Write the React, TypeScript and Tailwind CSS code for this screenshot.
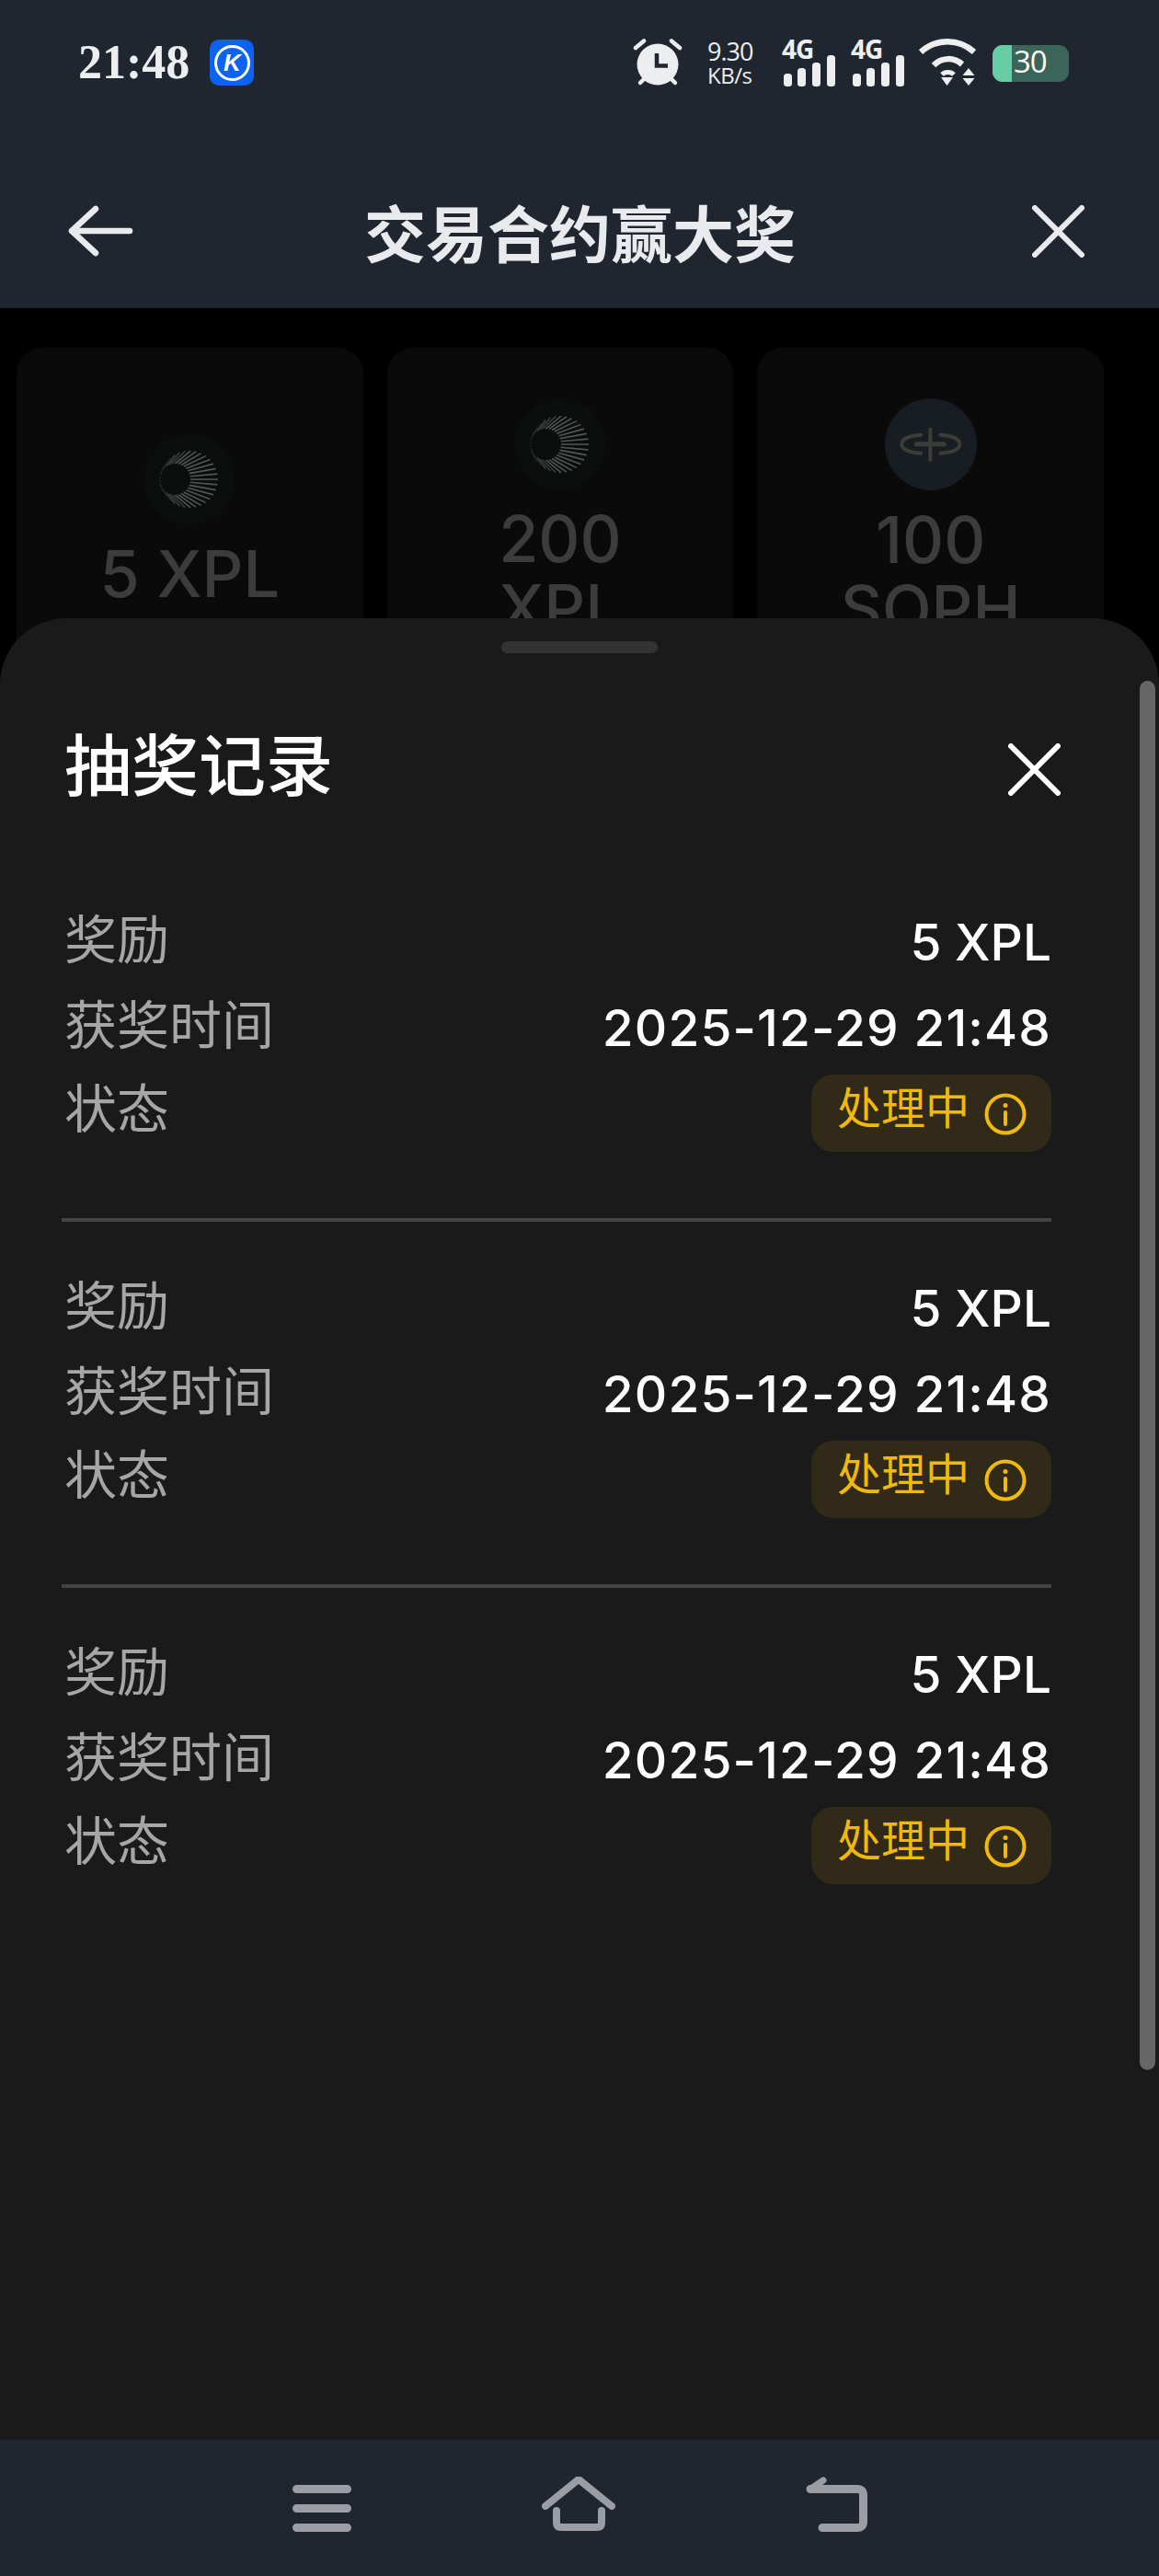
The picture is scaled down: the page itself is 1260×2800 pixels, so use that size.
import React from "react";

const rays = Array.from({ length: 33 }, (_, i) => -176 + i * 11);

function Burst() {
  return (
    <svg width="98" height="98" viewBox="0 0 98 98" className="shrink-0">
      <circle cx="49" cy="49" r="49" fill="#0a0e0d" />
      {rays.map((a) => {
        const t = (a * Math.PI) / 180;
        const fade = Math.abs(a) > 125 ? 0.25 : Math.abs(a) > 90 ? 0.65 : 1;
        const x1 = 33 + 17 * Math.cos(t);
        const y1 = 49 + 17 * Math.sin(t);
        const x2 = 49 + 31 * Math.cos(t);
        const y2 = 49 + 31 * Math.sin(t);
        return <line key={a} x1={x1} y1={y1} x2={x2} y2={y2} stroke="#555555" strokeWidth="1.6" opacity={fade} />;
      })}
    </svg>
  );
}

function Soph() {
  return (
    <svg width="100" height="100" viewBox="12.67 8.33 100 100" className="shrink-0">
      <circle cx="62.67" cy="58.33" r="50" fill="#181c23" />
      <g fill="none" stroke="#3b3d37" strokeWidth="4" strokeLinecap="round">
        <path d="M52 48C38 49 31 53 31 58C31 63 38 67 52 68" />
        <path d="M73 48C87 49 94 53 94 58C94 63 87 67 73 68" />
        <path d="M47 58H77" strokeWidth="5" />
        <path d="M62 42V75" />
      </g>
    </svg>
  );
}

function Alarm() {
  return (
    <svg width="54" height="52" viewBox="0 0 54 52" className="shrink-0">
      <g stroke="#eceef0" strokeLinecap="round" fill="none">
        <path d="M3 10L12 2.5M51 10L42 2.5" strokeWidth="4.5" />
        <path d="M8 48L13 43M46 48L41 43" strokeWidth="4.5" />
      </g>
      <circle cx="27" cy="28" r="22.5" fill="#eceef0" />
      <path d="M26 16V29.5H38" fill="none" stroke="#1f2630" strokeWidth="4.5" />
    </svg>
  );
}

function Signal() {
  return (
    <svg width="57" height="34" viewBox="0 0 57 34" className="shrink-0">
      <g fill="#eceef0">
        <rect x="0" y="20" width="9" height="14" rx="3.5" />
        <rect x="15" y="14" width="9" height="20" rx="3.5" />
        <rect x="31" y="8" width="9" height="26" rx="3.5" />
        <rect x="47" y="0" width="9" height="34" rx="3.5" />
      </g>
    </svg>
  );
}

function Wifi() {
  return (
    <svg width="63" height="52" viewBox="0 0 63 52" className="shrink-0">
      <g fill="none" stroke="#eceef0" strokeWidth="6.5">
        <path d="M2 14.5C19 -0.5 43 -0.5 60 14.5" />
        <path d="M16 29C25 20 38 20 47 28" />
      </g>
      <path d="M25 39C28 35.5 35 35.5 38 39" fill="none" stroke="#eceef0" strokeWidth="5" />
      <path d="M24 42H37L30.5 51Z" fill="#eceef0" />
      <path d="M47.5 40L54 32L60.5 40ZM47.5 43H60.5L54 51Z" fill="#eceef0" />
    </svg>
  );
}

function Net4G() {
  return (
    <div className="flex flex-col">
      <span className="font-['Open_Sans',sans-serif] font-bold text-[28px] leading-[20px] tracking-[-1px] text-[#eceef0] ml-[-2px] mb-[-3px]">4G</span>
      <Signal />
    </div>
  );
}

function Record({ last }: { last?: boolean }) {
  const label = "font-['Noto_Sans_CJK_SC',sans-serif] text-[57px] leading-[66px] text-[#a6a6a6] ml-[3px]";
  const value = "font-['Inter',sans-serif] font-medium text-[55px] leading-[80px] text-white";
  return (
    <div className={last ? "" : "border-b-4 border-[#444444] pb-[72px] mb-[54px]"}>
      <div className="flex justify-between items-start mb-[13px]">
        <span className={label}>奖励</span>
        <span className={value}>5 XPL</span>
      </div>
      <div className="flex justify-between items-start mb-[11px]">
        <span className={label}>获奖时间</span>
        <span className={value + " tracking-[1.1px]"}>2025-12-29 21:48</span>
      </div>
      <div className="flex justify-between items-start">
        <span className={label}>状态</span>
        <div className="w-[261px] h-[84px] rounded-[24px] bg-[#322a18] flex items-center pl-[28px] gap-[16px]">
          <span className="font-['Noto_Sans_CJK_SC',sans-serif] text-[48px] leading-[60px] text-[#f0b90b] mt-[-19px]">处理中</span>
          <svg width="46" height="46" viewBox="0 0 46 46" className="shrink-0 mt-[2px]">
            <circle cx="23" cy="23" r="20.5" fill="none" stroke="#f0b90b" strokeWidth="4" />
            <path d="M23 21V34" stroke="#f0b90b" strokeWidth="4" strokeLinecap="round" />
            <circle cx="23" cy="13.5" r="2.5" fill="#f0b90b" />
          </svg>
        </div>
      </div>
    </div>
  );
}

function Prize({ lines, icon }: { lines: string[]; icon: React.ReactNode }) {
  return (
    <div className="h-[376px] rounded-[28px] bg-[#0a0a0a] flex flex-col items-center justify-center overflow-hidden">
      {icon}
      <div className="mt-[16px] font-['Inter',sans-serif] font-medium text-[70px] leading-[75px] text-[#3c3c3c] text-center">
        {lines.map((l) => (
          <div key={l}>{l}</div>
        ))}
      </div>
    </div>
  );
}

export default function App() {
  return (
    <div className="relative w-[1260px] h-[2800px] overflow-hidden bg-black flex flex-col">
      <div className="h-[335px] shrink-0 bg-[#1f2630] flex flex-col">
        <div className="h-[50px] mt-[43px] flex items-center pl-[85px] pr-[98px]">
          <span className="font-['Liberation_Serif',serif] font-bold text-[52px] leading-[50px] text-[#eceef0]">21:48</span>
          <div className="ml-[22px] w-[48px] h-[50px] rounded-[10px] bg-[#0b63f0] flex items-center justify-center">
            <div className="w-[39px] h-[39px] rounded-full border-[3px] border-white flex items-center justify-center font-['Liberation_Sans',sans-serif] font-bold italic text-[26px] text-white">K</div>
          </div>
          <div className="ml-auto flex items-end gap-[27px]">
            <div className="mr-[4px]">
              <Alarm />
            </div>
            <div className="flex flex-col font-['Open_Sans',sans-serif] text-[#eceef0] w-[54px] -ml-[4px] mr-[3px]">
              <span className="text-[27px] leading-[28px] tracking-[-1px]">9.30</span>
              <span className="text-[24px] leading-[24px] tracking-[-0.5px]">KB/s</span>
            </div>
            <div className="flex items-end gap-[18px] -ml-[1px]">
              <Net4G />
              <Net4G />
            </div>
            <div className="flex items-end gap-[17px] -ml-[12px]">
              <Wifi />
              <div className="relative w-[83px] h-[40px] mb-[5px] rounded-[11px] bg-[#3a6558] flex">
                <div className="w-[21px] h-full rounded-l-[11px] bg-[#66cda5]" />
                <span className="absolute left-[23px] top-[-2px] font-['Open_Sans',sans-serif] font-medium text-[33px] leading-[40px] tracking-[-1px] text-white">30</span>
              </div>
            </div>
          </div>
        </div>
        <div className="mt-[123px] h-[70px] flex items-center justify-between pl-[73px] pr-[81px]">
          <svg width="72" height="56" viewBox="0 0 72 56" className="shrink-0">
            <path d="M31 4L5 28L31 52M5 28H68" fill="none" stroke="#e8eaed" strokeWidth="6.5" strokeLinecap="round" strokeLinejoin="round" />
          </svg>
          <span className="font-['Noto_Sans_CJK_SC',sans-serif] font-bold text-[67px] leading-[70px] text-[#e8eaed] ml-[-6px]">交易合约赢大奖</span>
          <svg width="57" height="57" viewBox="0 0 57 57" className="shrink-0">
            <path d="M3 3L54 54M54 3L3 54" fill="none" stroke="#e8eaed" strokeWidth="6" strokeLinecap="round" />
          </svg>
        </div>
      </div>

      <div className="flex-1 min-h-0 overflow-hidden grid grid-cols-3 gap-[26px] pl-[18px] pr-[60px] pt-[43px] content-start">
        <Prize lines={["5 XPL"]} icon={<Burst />} />
        <Prize lines={["200", "XPL"]} icon={<Burst />} />
        <Prize lines={["100", "SOPH"]} icon={<Soph />} />
      </div>

      <div className="absolute left-0 right-0 top-[672px] bottom-[148px] rounded-t-[72px] bg-[#1a1a1a] pt-[25px]">
        <div className="mx-auto w-[170px] h-[13px] rounded-full bg-[#333333]" />
        <div className="absolute right-[4px] top-[68px] w-[17px] h-[1510px] rounded-full bg-[#666666]" />
        <div className="pl-[67px] pr-[117px]">
          <div className="mt-[73px] h-[88px] flex items-center justify-between">
            <span className="font-['Noto_Sans_CJK_SC',sans-serif] font-medium text-[73px] leading-[88px] text-white ml-[3px]">抽奖记录</span>
            <svg width="57" height="57" viewBox="0 0 57 57" className="shrink-0 mr-[-10px] mt-[18px]">
              <path d="M3 3L54 54M54 3L3 54" fill="none" stroke="#ffffff" strokeWidth="6" strokeLinecap="round" />
            </svg>
          </div>
          <div className="mt-[113px]">
            <Record />
            <Record />
            <Record last />
          </div>
        </div>
      </div>

      <div className="relative h-[148px] shrink-0 bg-[#1f2630] flex justify-center gap-[207px] pt-[40px]">
        <svg width="64" height="60" viewBox="0 0 64 60" className="shrink-0">
          <path d="M4.5 13.5H59.5M4.5 34.5H59.5M4.5 55.5H59.5" stroke="#9a9da3" strokeWidth="9" strokeLinecap="round" />
        </svg>
        <svg width="80" height="60" viewBox="0 0 80 60" className="shrink-0">
          <g fill="none" stroke="#9a9da3" strokeWidth="8" strokeLinecap="round" strokeLinejoin="round">
            <path d="M4 32L40 3L76 32" />
            <path d="M16 37V50Q16 55 21 55H60Q65 55 65 50V37" />
          </g>
        </svg>
        <svg width="67" height="60" viewBox="0 0 67 60" className="shrink-0">
          <g fill="none" stroke="#9a9da3" strokeWidth="9" strokeLinecap="round" strokeLinejoin="round">
            <path d="M5 13.5H56Q62.5 13.5 62.5 20V49Q62.5 55.5 56 55.5H18" />
            <path d="M5 13.5L19 4" strokeWidth="7" />
          </g>
        </svg>
      </div>
    </div>
  );
}
